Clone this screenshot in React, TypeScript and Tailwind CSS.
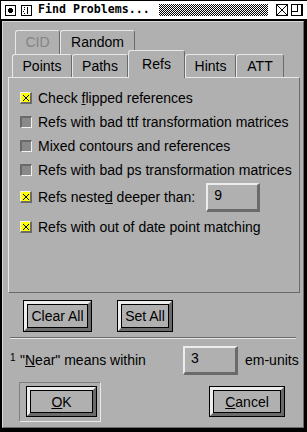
import React from 'react';

const Check: React.FC<{ on?: boolean }> = ({ on }) =>
    on ? (
        <span className="w-[12px] h-[12px] shrink-0 border-t border-l border-t-[#f0f0f0] border-l-[#f0f0f0] border-r-2 border-b-2 border-r-[#6a6a6a] border-b-[#6a6a6a] bg-[#ffff00] flex items-center justify-center">
            <svg width="8" height="8" viewBox="0 0 8 8" shapeRendering="crispEdges">
                <path d="M1 1L7 7M7 1L1 7" stroke="#000" strokeWidth="1" />
            </svg>
        </span>
    ) : (
        <span className="w-[12px] h-[12px] shrink-0 border-t-2 border-l-2 border-t-[#6a6a6a] border-l-[#6a6a6a] border-r border-b border-r-[#f0f0f0] border-b-[#f0f0f0] bg-[#8a8a8a]" />
    );

const Field: React.FC<{ className: string; value: string }> = ({ className, value }) => (
    <div className={`${className} h-[29px] border-t-2 border-l-2 border-t-[#ececec] border-l-[#ececec] border-r-[3px] border-b-[3px] border-r-[#6a6a6a] border-b-[#6a6a6a] pl-[6px] pt-[1px] text-[14px] leading-[18px]`}>
        {value}
    </div>
);

const Button: React.FC<{ className: string; children: React.ReactNode }> = ({ className, children }) => (
    <div className={`${className} border border-black`}>
        <div className="h-full border-[3px] border-t-[#ececec] border-l-[#ececec] border-r-[#6a6a6a] border-b-[#6a6a6a]">
            <div className="h-full border border-black flex items-center justify-center text-[14px] leading-none">
                {children}
            </div>
        </div>
    </div>
);

const tab = 'h-[23px] flex items-center justify-center text-[14px] border-t border-l border-t-[#e8e8e8] border-l-[#e8e8e8] border-r border-r-[#6a6a6a] rounded-t-[3px] bg-[#b0b0b0]';

const App: React.FC = () => {
    return (
        <div className="w-[307px] h-[432px] bg-black flex flex-col font-['Liberation_Sans',Arial,sans-serif] text-black overflow-hidden">
            {/* Title bar */}
            <div className="mt-[1px] ml-[1px] h-[18px] bg-white flex items-center shrink-0">
                <svg className="ml-[4px]" width="11" height="11" viewBox="0 0 11 11" shapeRendering="crispEdges">
                    <rect x="0.5" y="0.5" width="10" height="10" fill="none" stroke="#000" />
                    <circle cx="5.5" cy="5.5" r="2.5" fill="#000" />
                </svg>
                <svg className="ml-[5px]" width="11" height="11" viewBox="0 0 11 11" shapeRendering="crispEdges">
                    <rect x="0.5" y="0.5" width="10" height="10" fill="none" stroke="#000" />
                    <path d="M3 2h1M3 4h1M2 6h1M3 8h1" stroke="#000" />
                    <path d="M6.5 2V9" stroke="#000" />
                </svg>
                <div className="ml-[6px] w-[121px] font-['DejaVu_Sans_Mono','Liberation_Mono',monospace] font-bold text-[11.6px] leading-none">
                    Find Problems...
                </div>
                <svg width="109" height="12" shapeRendering="crispEdges">
                    <defs>
                        <pattern id="dither" width="2" height="2" patternUnits="userSpaceOnUse">
                            <rect x="0" y="0" width="1" height="1" fill="#000" />
                            <rect x="1" y="1" width="1" height="1" fill="#000" />
                        </pattern>
                    </defs>
                    <rect width="109" height="12" fill="url(#dither)" />
                </svg>
                <svg className="ml-[8px]" width="12" height="12" viewBox="0 0 12 12" shapeRendering="crispEdges">
                    <rect x="0.5" y="0.5" width="11" height="11" fill="none" stroke="#000" />
                    <path d="M1 1L11 11M11 1L1 11" stroke="#000" />
                </svg>
                <svg className="ml-[3px]" width="12" height="12" viewBox="0 0 12 12" shapeRendering="crispEdges">
                    <rect x="0.5" y="0.5" width="11" height="11" fill="none" stroke="#000" />
                    <path d="M1 7.5H6.5V1" stroke="#000" fill="none" />
                    <path d="M10 1V11" stroke="#000" />
                </svg>
            </div>

            {/* Window body */}
            <div className="mt-[2px] ml-[2px] w-[302px] h-[407px] bg-[#b0b0b0] border border-t-[#d8d8d8] border-l-[#d8d8d8] border-r-[#6a6a6a] border-b-[#6a6a6a] flex flex-col">
                {/* Tabs, back row */}
                <div className="mt-[8px] pl-[12px] h-[24px] flex">
                    <div className={`${tab} h-[24px] w-[45px] text-[#858585]`}>CID</div>
                    <div className={`${tab} h-[24px] w-[75px]`}>Random</div>
                </div>
                {/* Tabs, front row */}
                <div className="relative -mt-[4px] pl-[9px] h-[27px] flex items-end">
                    <div className={`${tab} w-[60px]`}>Points</div>
                    <div className={`${tab} w-[56px]`}>Paths</div>
                    <div className={`${tab} relative z-10 h-[28px] -mb-px w-[57px]`}>Refs</div>
                    <div className={`${tab} w-[51px]`}>Hints</div>
                    <div className={`${tab} w-[48px]`}>ATT</div>
                </div>

                {/* Panel */}
                <div className="ml-[5px] mr-[3px] h-[216px] border border-t-[#e8e8e8] border-l-[#e8e8e8] border-r-[#6a6a6a] border-b-[#6a6a6a] pt-[8px] pl-[11px] text-[14px]">
                    <div className="h-[24px] flex items-center gap-[6px]">
                        <Check on />
                        <span>Check <span className="underline">f</span>lipped references</span>
                    </div>
                    <div className="h-[24px] flex items-center gap-[6px]">
                        <Check />
                        <span>Refs with bad ttf transformation matrices</span>
                    </div>
                    <div className="h-[24px] flex items-center gap-[6px]">
                        <Check />
                        <span>Mixed contours and references</span>
                    </div>
                    <div className="h-[24px] flex items-center gap-[6px]">
                        <Check />
                        <span>Refs with bad ps transformation matrices</span>
                    </div>
                    <div className="h-[30px] flex items-center gap-[6px]">
                        <Check on />
                        <span>Refs neste<span className="underline">d</span> deeper than:</span>
                        <Field className="ml-[5px] w-[54px]" value="9" />
                    </div>
                    <div className="h-[30px] flex items-center gap-[6px]">
                        <Check on />
                        <span>Refs with out of date point matching</span>
                    </div>
                </div>

                {/* Clear / Set */}
                <div className="mt-[7px] pl-[20px] flex gap-[25px]">
                    <Button className="w-[69px] h-[32px]">Clear All</Button>
                    <Button className="w-[56px] h-[32px]">Set All</Button>
                </div>

                <div className="mt-[5px] mx-[7px] border-t border-t-[#6a6a6a] border-b border-b-[#e8e8e8]" />

                {/* Near row */}
                <div className="mt-[7px] pl-[7px] h-[29px] flex items-center text-[14px]">
                    <div className="w-[173px] flex items-center">
                        <span className="w-[10px] text-[10px] leading-none -mt-[6px]">1</span>
                        <span>"<span className="underline">N</span>ear" means within</span>
                    </div>
                    <Field className="w-[55px]" value="3" />
                    <span className="ml-[7px]">em-units</span>
                </div>

                {/* OK / Cancel */}
                <div className="mt-[7px] pl-[16px] pr-[18px] flex items-start">
                    <div className="w-[82px] h-[40px] border border-t-[#808080] border-l-[#808080] border-r-[#e8e8e8] border-b-[#e8e8e8] pl-[6px] pr-[3px] pt-[3px] pb-[4px]">
                        <Button className="w-full h-full">
                            <span><span className="underline">O</span>K</span>
                        </Button>
                    </div>
                    <Button className="ml-auto mt-[4px] w-[76px] h-[31px]">
                        <span><span className="underline">C</span>ancel</span>
                    </Button>
                </div>
            </div>
        </div>
    );
};

export default App;
